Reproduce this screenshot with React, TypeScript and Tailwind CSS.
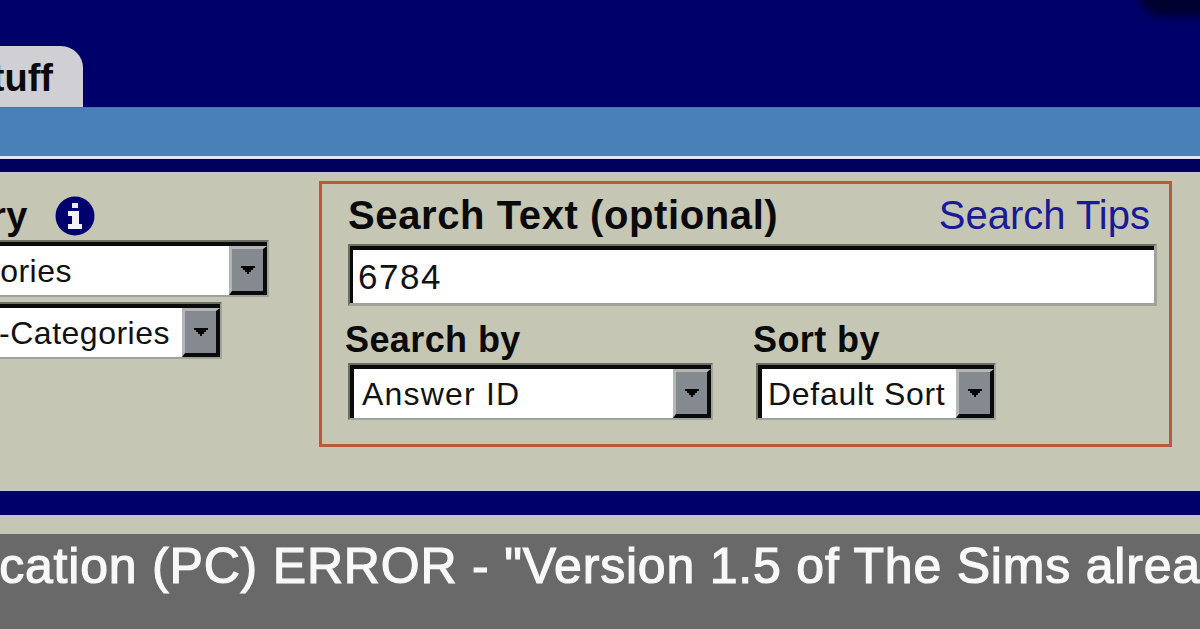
function DropArrow() {
  return (
    <svg width="16" height="10" viewBox="0 0 16 10" className="shrink-0">
      <path d="M1 1h14v2h-2v2h-2v2h-2v2H7V7H5V5H3V3H1z" fill="#050505" />
    </svg>
  );
}

function InfoIcon() {
  return (
    <svg width="40" height="40" viewBox="0 0 40 40" className="shrink-0">
      <circle cx="20" cy="20" r="19.5" fill="#00006e" />
      <rect x="17" y="7" width="6" height="5" fill="#e8e8f8" />
      <path d="M13 15h11v13h3v5H13v-5h4v-8h-4z" fill="#f2f2ff" />
    </svg>
  );
}

function FakeSelect({ width, textClass, children }: { width: string; textClass: string; children: React.ReactNode }) {
  return (
    <div className={`${width} h-[57px] shrink-0 flex border-2 border-t-[#6b6e64] border-l-[#6b6e64] border-r-[#9fa39c] border-b-[#9fa39c]`}>
      <div className="flex flex-1 min-w-0 border-t-[4px] border-l-[4px] border-[#0a0a0a]">
        <div className={`flex-1 min-w-0 bg-white flex items-center overflow-hidden whitespace-nowrap text-[#111] pt-[1px] ${textClass}`}>
          {children}
        </div>
        <div className="w-[38px] shrink-0 flex items-center justify-center bg-[#858a90] border-t-[3px] border-l-[3px] border-t-[#b4b7b6] border-l-[#b4b7b6] border-r-[4px] border-b-[4px] border-r-[#0a0a0a] border-b-[#0a0a0a]">
          <DropArrow />
        </div>
      </div>
    </div>
  );
}

export default function App() {
  return (
    <div className="w-[1200px] h-[629px] overflow-hidden flex flex-col bg-[#00006b] font-['Liberation_Sans',Arial,sans-serif] relative">
      {/* dark corner top right */}
      <div className="absolute right-[-30px] top-[-28px] w-[90px] h-[44px] rounded-full bg-[#00002e] blur-[5px]" />

      <div className="h-[107px] shrink-0 flex items-end">
        <div className="w-[83px] h-[61px] bg-[#cfcfd4] rounded-tr-[22px] flex justify-end items-center pr-[30px] overflow-hidden">
          <span className="text-[38px] font-bold text-[#0a0a0a] leading-none whitespace-nowrap pt-[2px]">Stuff</span>
        </div>
      </div>

      <div className="h-[49px] shrink-0 bg-[#4a80b8] border-t border-[#4a6cb4]" />
      <div className="h-[3px] shrink-0 bg-[#dfe6fa]" />
      <div className="h-[13px] shrink-0 bg-[#00005c]" />

      <div className="h-[319px] shrink-0 bg-[#c6c6b4] border-t-[2px] border-b-[2px] border-[#c4c2d4] flex items-start pt-[7px]">
        {/* category column, runs off the left edge */}
        <div className="w-[319px] shrink-0 overflow-hidden flex flex-col">
          <div className="h-[59px] flex justify-end items-start pr-[224px] pt-[15px] gap-[27px]">
            <span className="text-[38px] leading-[40px] font-bold tracking-[0.5px] text-[#0a0a0a] whitespace-nowrap">Category</span>
            <InfoIcon />
          </div>
          <div className="flex justify-end pr-[50px]">
            <FakeSelect width="w-[320px]" textClass="text-[32px] tracking-[0.5px] justify-end pr-[157px]">All Categories</FakeSelect>
          </div>
          <div className="flex justify-end pr-[97px] mt-[5px]">
            <FakeSelect width="w-[280px]" textClass="text-[32px] tracking-[0.5px] justify-end pr-[12px]">All Sub-Categories</FakeSelect>
          </div>
        </div>

        <div className="w-[853px] h-[266px] shrink-0 border-[3px] border-[#b85a3c] pl-[26px] pr-[12px] pt-[11px] flex flex-col">
          <div className="flex justify-between items-start h-[49px] pr-[7px]">
            <span className="text-[40px] leading-[40px] font-bold tracking-[0.6px] text-[#0a0a0a] whitespace-nowrap">Search Text (optional)</span>
            <span className="text-[40px] leading-[40px] text-[#1a1a96] whitespace-nowrap">Search Tips</span>
          </div>
          <div className="h-[62px] border-t-[2px] border-l-[2px] border-r-[3px] border-b-[3px] border-t-[#6b6e64] border-l-[#6b6e64] border-r-[#9fa39c] border-b-[#9fa39c]">
            <div className="h-full bg-white border-t-[4px] border-l-[3px] border-[#0a0a0a] flex items-center pl-[5px]">
              <span className="text-[35px] tracking-[1.5px] text-[#111] leading-none">6784</span>
            </div>
          </div>
          <div className="flex gap-[40px] mt-[15px] -ml-[3px]">
            <div className="flex flex-col">
              <span className="text-[36px] leading-[38px] mb-[4px] font-bold text-[#0a0a0a] tracking-[0.4px] whitespace-nowrap">Search by</span>
              <div className="ml-[3px]">
                <FakeSelect width="w-[365px]" textClass="text-[32px] tracking-[1.2px] pl-[8px]">Answer ID</FakeSelect>
              </div>
            </div>
            <div className="flex flex-col">
              <span className="text-[36px] leading-[38px] mb-[4px] font-bold text-[#0a0a0a] tracking-[0.4px] whitespace-nowrap">Sort by</span>
              <div className="ml-[3px]">
                <FakeSelect width="w-[240px]" textClass="text-[32px] tracking-[0.7px] pl-[6px]">Default Sort</FakeSelect>
              </div>
            </div>
          </div>
        </div>
      </div>

      <div className="h-[24px] shrink-0 bg-[#00006b]" />
      <div className="h-[19px] shrink-0 bg-[#c6c6b4] border-t-[2px] border-[#c4c2d4]" />
      <div className="flex-1 bg-[#696969] overflow-hidden pt-[5px]">
        <div className="ml-[-116px] text-[50px] leading-[54px] tracking-[0.8px] [-webkit-text-stroke:1.2px_#f8f8f8] text-[#f8f8f8] whitespace-nowrap">
          Application (PC) ERROR - "Version 1.5 of The Sims already installed"
        </div>
      </div>
    </div>
  );
}
